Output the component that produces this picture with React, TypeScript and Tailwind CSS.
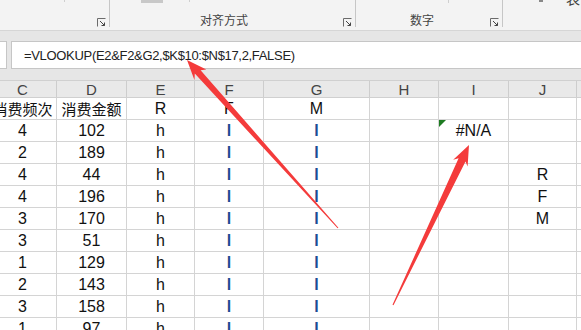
import React from "react";

const widths = ["w-[57px]", "w-[70px]", "w-[68px]", "w-[69px]", "w-[106px]", "w-[69px]", "w-[70px]", "w-[68px]"];
const letters = ["C", "D", "E", "F", "G", "H", "I", "J"];

const rows: string[][] = [
  ["消费频次", "消费金额", "R", "F", "M", "", "", ""],
  ["4", "102", "h", "l", "l", "", "#N/A", ""],
  ["2", "189", "h", "l", "l", "", "", ""],
  ["4", "44", "h", "l", "l", "", "", "R"],
  ["4", "196", "h", "l", "l", "", "", "F"],
  ["3", "170", "h", "l", "l", "", "", "M"],
  ["3", "51", "h", "l", "l", "", "", ""],
  ["1", "129", "h", "l", "l", "", "", ""],
  ["2", "143", "h", "l", "l", "", "", ""],
  ["3", "158", "h", "l", "l", "", "", ""],
  ["1", "97", "h", "l", "l", "", "", ""],
];

function Launcher() {
  return (
    <svg width="9" height="9" viewBox="0 0 9 9" className="shrink-0">
      <path d="M0.5 8.5V0.5H8.5" fill="none" stroke="#6b6b6b" strokeWidth="1" />
      <path d="M3 3L7.5 7.5M4.5 7.5H7.5V4.5" fill="none" stroke="#444" strokeWidth="1" />
    </svg>
  );
}

function Ribbon() {
  return (
    <div className="shrink-0 flex h-[31px] bg-[#f3f3f3] border-b border-[#d6d6d6] overflow-hidden">
      <div className="w-[110px] h-[27px] border-r border-[#c6c6c6] flex flex-col">
        <div className="ml-[64px] w-px h-[2px] bg-[#cfcfcf]" />
        <div className="mt-auto flex justify-end pr-[3px]">
          <Launcher />
        </div>
      </div>
      <div className="w-[246px] h-[27px] border-r border-[#c6c6c6] flex flex-col">
        <div className="flex">
          <div className="ml-[31px] w-[22px] h-[3px] bg-[#c8c8c8]" />
          <div className="ml-[26px] w-px h-[2px] bg-[#cfcfcf]" />
        </div>
        <div className="mt-auto flex items-end pr-[3px]">
          <span className="ml-[90px] text-[12px] leading-[14px] text-[#444]">对齐方式</span>
          <div className="ml-auto">
            <Launcher />
          </div>
        </div>
      </div>
      <div className="w-[147px] h-[27px] border-r border-[#c6c6c6] flex flex-col">
        <div className="ml-[92px] w-px h-[3px] bg-[#cfcfcf]" />
        <div className="mt-auto flex items-end pr-[3px]">
          <span className="ml-[54px] text-[12px] leading-[14px] text-[#444]">数字</span>
          <div className="ml-auto">
            <Launcher />
          </div>
        </div>
      </div>
      <div className="flex-1 flex items-start">
        <div className="ml-[36px] w-[4px] h-[2px] bg-[#888]" />
        <span className="ml-[23px] -mt-[9px] text-[14px] leading-[14px] text-[#444]">表</span>
      </div>
    </div>
  );
}

function FormulaBar() {
  return (
    <div className="shrink-0 bg-[#e6e6e6] pt-[10px] pb-[11px] flex gap-[4px]">
      <div className="w-[7px] h-[28px] bg-white border border-l-0 border-[#c6c6c6]" />
      <div className="flex-1 h-[28px] bg-white border border-r-0 border-[#c6c6c6] flex items-center pl-[12px]">
        <span className="text-[13px] leading-none tracking-[-0.32px] text-[#222] font-['Liberation_Sans',sans-serif]">
          =VLOOKUP(E2&amp;F2&amp;G2,$K$10:$N$17,2,FALSE)
        </span>
      </div>
    </div>
  );
}

function Cell({ value, i }: { value: string; i: number }) {
  const cjk = /[\u4e00-\u9fff]/.test(value);
  return (
    <div
      className={`${widths[i]} shrink-0 h-[22px] border-r border-b border-[#d4d4d4] flex items-center justify-center whitespace-nowrap relative ${
        i === 0 ? "pr-[11px]" : ""
      }`}
    >
      {value === "#N/A" && (
        <svg width="7" height="7" viewBox="0 0 7 7" className="absolute left-0 top-0">
          <path d="M0 0H7L0 7Z" fill="#1e7b22" />
        </svg>
      )}
      <span
        className={
          cjk
            ? "text-[15px] text-[#111] font-['Noto_Sans_CJK_SC',sans-serif] leading-none"
            : value === "l"
            ? "text-[16px] text-[#1d4c93] font-bold font-['Liberation_Sans',sans-serif] leading-none"
            : "text-[16px] text-[#111] font-['Liberation_Sans',sans-serif] leading-none"
        }
      >
        {value}
      </span>
    </div>
  );
}

function Sheet() {
  return (
    <div className="flex-1 min-h-0 bg-white">
      <div className="flex h-[18px] bg-[#e9e9e9] border-t border-b border-[#d0d0d0]">
        {letters.map((l, i) => (
          <div
            key={l}
            className={`${widths[i]} shrink-0 h-full border-r border-[#cdcdcd] flex items-center justify-center ${
              i === 0 ? "pr-[11px]" : ""
            }`}
          >
            <span className="text-[15px] leading-none text-[#444] font-['Liberation_Sans',sans-serif]">{l}</span>
          </div>
        ))}
        <div className="flex-1" />
      </div>
      {rows.map((r, ri) => (
        <div key={ri} className="flex">
          {r.map((v, i) => (
            <Cell key={i} value={v} i={i} />
          ))}
          <div className="flex-1 h-[22px] border-b border-[#d4d4d4]" />
        </div>
      ))}
    </div>
  );
}

function Arrows() {
  return (
    <svg className="absolute inset-0 pointer-events-none" width="581" height="330" viewBox="0 0 581 330">
      <polygon
        points="187,60 206.3,69.6 200.6,70.2 338.4,227.7 337.6,228.3 194.8,73.6 194.5,80.2"
        fill="#f43b3b"
      />
      <polygon
        points="469,145 467.6,166.5 465.5,161.4 393.5,305.2 392.5,304.8 458.6,158.2 453.2,159.7"
        fill="#f43b3b"
      />
    </svg>
  );
}

export default function App() {
  return (
    <div className="relative w-[581px] h-[330px] overflow-hidden flex flex-col bg-white font-['Noto_Sans_CJK_SC','Liberation_Sans',sans-serif]">
      <Ribbon />
      <FormulaBar />
      <Sheet />
      <Arrows />
    </div>
  );
}
